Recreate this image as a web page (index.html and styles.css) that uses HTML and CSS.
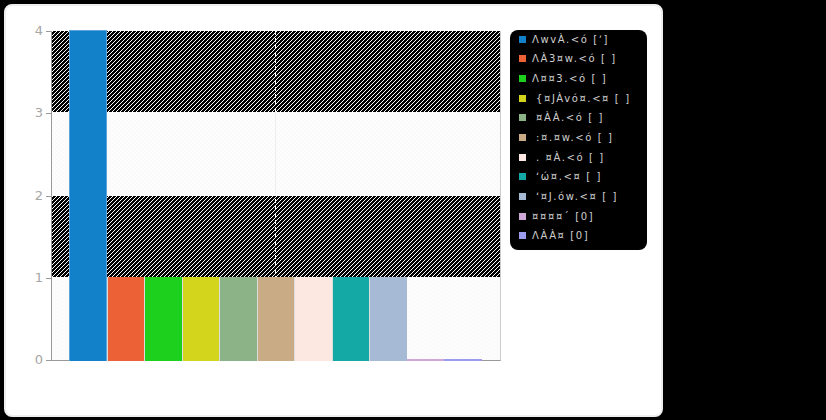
FILE: index.html
```html
<!DOCTYPE html>
<html lang="en">
<head>
<meta charset="utf-8">
<title>Chart</title>
<link rel="stylesheet" href="styles.css">
</head>
<body>
<main class="card">
  <section class="chart">
    <div class="yaxis">
      <div class="ylabel"><span>4</span><i class="tick"></i></div>
      <div class="ylabel"><span>3</span><i class="tick"></i></div>
      <div class="ylabel"><span>2</span><i class="tick"></i></div>
      <div class="ylabel"><span>1</span><i class="tick"></i></div>
      <div class="ylabel"><span>0</span><i class="tick"></i></div>
    </div>
    <div class="plot">
      <div class="band hatch b1"></div>
      <div class="band pale b2"></div>
      <div class="band hatch b3"></div>
      <div class="band pale b4"></div>
      <div class="midline"></div>
      <div class="bars">
        <div class="bar tall c1"></div>
        <div class="bar one c2"></div>
        <div class="bar one c3"></div>
        <div class="bar one c4"></div>
        <div class="bar one c5"></div>
        <div class="bar one c6"></div>
        <div class="bar one c7"></div>
        <div class="bar one c8"></div>
        <div class="bar one c9"></div>
        <div class="bar zero c10"></div>
        <div class="bar zero c11"></div>
      </div>
    </div>
  </section>
  <ul class="legend">
    <li><i class="sw c1"></i><span>ΛwvÀ.&lt;ó [ʼ]</span></li>
    <li><i class="sw c2"></i><span>ΛÀ3¤w.&lt;ó [ ]</span></li>
    <li><i class="sw c3"></i><span>Λ¤¤3.&lt;ó [ ]</span></li>
    <li><i class="sw c4"></i><span class="ind">{¤JÀvó¤.&lt;¤ [ ]</span></li>
    <li><i class="sw c5"></i><span class="ind">¤ÀÀ.&lt;ó [ ]</span></li>
    <li><i class="sw c6"></i><span class="ind">:¤.¤w.&lt;ó [ ]</span></li>
    <li><i class="sw c7"></i><span class="ind">. ¤À.&lt;ó [ ]</span></li>
    <li><i class="sw c8"></i><span class="ind">ʻώ¤.&lt;¤ [ ]</span></li>
    <li><i class="sw c9"></i><span class="ind">ʻ¤J.ów.&lt;¤ [ ]</span></li>
    <li><i class="sw c10"></i><span>¤¤¤¤ˊ [0]</span></li>
    <li><i class="sw c11"></i><span>ΛÀÀ¤ [0]</span></li>
  </ul>
</main>
</body>
</html>
```
FILE: styles.css
```css
* { box-sizing: border-box; }
html, body { margin: 0; height: 100%; }
body { width: 826px; height: 420px; background: #000; overflow: hidden; font-family: "DejaVu Sans", sans-serif; }
.card {
  margin: 4px 0 0 4px;
  width: 659px;
  height: 413px;
  background: #fff;
  border: 2px solid #eee;
  border-radius: 8px;
  display: flex;
  align-items: flex-start;
  padding: 24px 0 0 40px;
}
.chart { display: flex; width: 464px; height: 331px; margin-top: 1px; flex: none; }
.yaxis { width: 5px; height: 330px; position: relative; flex: none; display: flex; flex-direction: column; justify-content: space-between; }
.ylabel { height: 1px; display: flex; align-items: center; justify-content: flex-end; position: relative; color: #a6a6a6; font: 13px "DejaVu Sans", sans-serif; }
.ylabel span { position: absolute; right: 8px; top: -9px; line-height: 18px; }
.tick { width: 5px; height: 1px; background: #999; display: block; }
.plot { position: relative; width: 450px; height: 330px; border-left: 1px solid #999; border-bottom: 1px solid #999; border-right: 1px solid #ccc; display: flex; flex-direction: column; }
.band { flex: none; }
.b1 { height: 81px; }
.b2 { height: 84px; }
.b3 { height: 81px; }
.b4 { height: 83px; }
.hatch { background: linear-gradient(135deg, #fff 0, #fff 14%, #000 14%, #000 50%, #fff 50%, #fff 64%, #000 64%, #000 100%) 0 0 / 4px 4px; }
.pale { background: repeating-conic-gradient(#fafafa 0 25%, #fdfdfd 0 50%) 0 0 / 4px 4px; }
.midline { position: absolute; left: 223px; top: 0; bottom: 83px; width: 1px; background: repeating-linear-gradient(to bottom, #fff 0, #fff 4px, transparent 4px, transparent 7px); }
.midline::after { content: ""; position: absolute; left: 0; top: 81px; height: 84px; width: 1px; background: #eee; }
.bars { position: absolute; left: 17px; bottom: -1px; display: flex; align-items: flex-end; height: 331px; }
.bar { width: 37.5px; flex: none; }
.tall { height: 331px; border: 1px solid #5aa5dc; border-width: 1px 1px 0 1px; }
.one { height: 84px; border-left: 1px solid #ddd; }
.zero { height: 2px; }
.c1 { background: #1380ca; }
.c2 { background: #ed6136; }
.c3 { background: #1ed01e; }
.c4 { background: #d3d51d; }
.c5 { background: #8cb388; }
.c6 { background: #c9ab85; }
.c7 { background: #fce8e0; }
.c8 { background: #14a9a5; }
.c9 { background: #a6bad5; }
.c10 { background: #d0a8d8; }
.c11 { background: #9c9cee; }
.legend {
  list-style: none;
  margin: 0;
  padding: 3px 0 0 9px;
  width: 137px;
  height: 220px;
  background: #000;
  border-radius: 8px;
  display: flex;
  flex-direction: column;
  gap: 7.7px;
  flex: none;
}
.legend li { display: flex; align-items: center; gap: 6px; height: 12px; color: #cfcfcf; font: 10px "DejaVu Sans", sans-serif; letter-spacing: 1.6px; white-space: nowrap; }
.sw { width: 7px; height: 7px; display: block; flex: none; }
.ind { margin-left: 4px; }
```
